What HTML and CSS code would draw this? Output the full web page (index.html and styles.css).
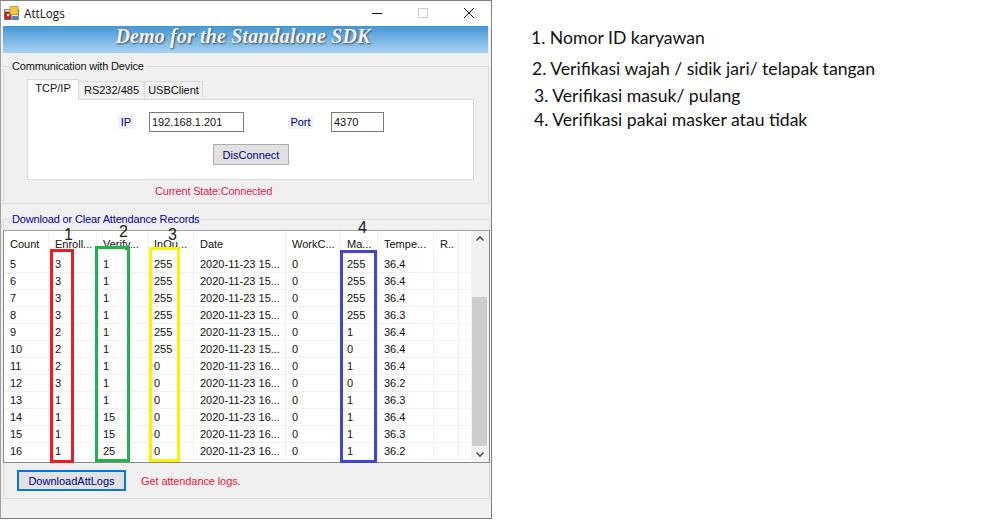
FILE: index.html
```html
<!DOCTYPE html>
<html lang="en">
<head>
    <meta charset="UTF-8">
    <title>AttLogs</title>
    <link rel="stylesheet" href="styles.css">
</head>
<body>
    <div class="window">
        <div class="titlebar">
            <svg class="app-icon" width="15" height="15" viewBox="0 0 15 15">
                <rect x="0.5" y="3.5" width="14" height="10" fill="#e8e8e8" stroke="#8a8a8a"/>
                <rect x="1" y="6" width="6" height="7" fill="#d8281e" stroke="#7a2a20" stroke-width="0.7"/>
                <rect x="3" y="8" width="2" height="2" fill="#fff"/>
                <rect x="6" y="0.5" width="8" height="8" fill="#f6c83a" stroke="#a98a2a" stroke-width="0.7"/>
                <rect x="8" y="10" width="6" height="4" fill="#4f7fd8"/>
            </svg>
            <span class="title">AttLogs</span>
            <div class="controls">
                <svg width="12" height="12" viewBox="0 0 12 12"><path d="M1 6.5H11" stroke="#111" fill="none"/></svg>
                <svg width="12" height="12" viewBox="0 0 12 12"><rect x="1.5" y="1.5" width="9" height="9" stroke="#ccc" fill="none"/></svg>
                <svg width="12" height="12" viewBox="0 0 12 12"><path d="M1 1L11 11M11 1L1 11" stroke="#111" fill="none"/></svg>
            </div>
        </div>
        <div class="banner">Demo for the Standalone SDK</div>

        <fieldset class="group group-device">
            <legend>Communication with Device</legend>
            <div class="tabs">
                <div class="tab tab-active">TCP/IP</div>
                <div class="tab tab-rs">RS232/485</div>
                <div class="tab tab-usb">USBClient</div>
            </div>
            <div class="tab-panel">
                <div class="conn-row">
                    <label class="conn-label label-ip">IP</label>
                    <input class="conn-input input-ip" type="text" value="192.168.1.201">
                    <label class="conn-label label-port">Port</label>
                    <input class="conn-input input-port" type="text" value="4370">
                </div>
                <button class="btn btn-connect">DisConnect</button>
            </div>
            <div class="state">Current State:Connected</div>
        </fieldset>

        <fieldset class="group group-records">
            <legend>Download or Clear Attendance Records</legend>
            <div class="list">
                <table class="log-table">
                    <colgroup>
                        <col class="c-count"><col class="c-enroll"><col class="c-verify"><col class="c-inout"><col class="c-date">
                        <col class="c-work"><col class="c-mask"><col class="c-temp"><col class="c-r"><col class="c-end">
                    </colgroup>
                    <thead>
                        <tr><th>Count</th><th>Enroll...</th><th>Verify...</th><th>InOu...</th><th>Date</th><th>WorkC...</th><th>Ma...</th><th>Tempe...</th><th>R..</th><th></th></tr>
                    </thead>
                    <tbody>
                        <tr><td>5</td><td>3</td><td>1</td><td>255</td><td>2020-11-23 15...</td><td>0</td><td>255</td><td>36.4</td><td></td><td></td></tr>
                        <tr><td>6</td><td>3</td><td>1</td><td>255</td><td>2020-11-23 15...</td><td>0</td><td>255</td><td>36.4</td><td></td><td></td></tr>
                        <tr><td>7</td><td>3</td><td>1</td><td>255</td><td>2020-11-23 15...</td><td>0</td><td>255</td><td>36.4</td><td></td><td></td></tr>
                        <tr><td>8</td><td>3</td><td>1</td><td>255</td><td>2020-11-23 15...</td><td>0</td><td>255</td><td>36.3</td><td></td><td></td></tr>
                        <tr><td>9</td><td>2</td><td>1</td><td>255</td><td>2020-11-23 15...</td><td>0</td><td>1</td><td>36.4</td><td></td><td></td></tr>
                        <tr><td>10</td><td>2</td><td>1</td><td>255</td><td>2020-11-23 15...</td><td>0</td><td>0</td><td>36.4</td><td></td><td></td></tr>
                        <tr><td>11</td><td>2</td><td>1</td><td>0</td><td>2020-11-23 16...</td><td>0</td><td>1</td><td>36.4</td><td></td><td></td></tr>
                        <tr><td>12</td><td>3</td><td>1</td><td>0</td><td>2020-11-23 16...</td><td>0</td><td>0</td><td>36.2</td><td></td><td></td></tr>
                        <tr><td>13</td><td>1</td><td>1</td><td>0</td><td>2020-11-23 16...</td><td>0</td><td>1</td><td>36.3</td><td></td><td></td></tr>
                        <tr><td>14</td><td>1</td><td>15</td><td>0</td><td>2020-11-23 16...</td><td>0</td><td>1</td><td>36.4</td><td></td><td></td></tr>
                        <tr><td>15</td><td>1</td><td>15</td><td>0</td><td>2020-11-23 16...</td><td>0</td><td>1</td><td>36.3</td><td></td><td></td></tr>
                        <tr><td>16</td><td>1</td><td>25</td><td>0</td><td>2020-11-23 16...</td><td>0</td><td>1</td><td>36.2</td><td></td><td></td></tr>
                    </tbody>
                </table>
                <div class="scrollbar">
                    <svg class="arrow" width="16" height="16" viewBox="0 0 16 16"><path d="M4.5 9.5L8 6L11.5 9.5" stroke="#555" stroke-width="1.6" fill="none"/></svg>
                    <div class="scroll-space"></div>
                    <div class="scroll-thumb"></div>
                    <svg class="arrow" width="16" height="16" viewBox="0 0 16 16"><path d="M4.5 6.5L8 10L11.5 6.5" stroke="#555" stroke-width="1.6" fill="none"/></svg>
                </div>
            </div>
            <div class="actions">
                <button class="btn btn-download">DownloadAttLogs</button>
                <span class="hint">Get attendance logs.</span>
            </div>
        </fieldset>

        <!-- hand drawn marks on top of the screenshot -->
        <div class="mark mark-red"></div>
        <div class="mark mark-green"></div>
        <div class="mark mark-yellow"></div>
        <div class="mark mark-blue"></div>
        <span class="mark-num num-1">1</span>
        <span class="mark-num num-2">2</span>
        <span class="mark-num num-3">3</span>
        <span class="mark-num num-4">4</span>
    </div>

    <div class="notes">
        <p class="note note-1">1. Nomor ID karyawan</p>
        <p class="note note-2">2. Verifikasi wajah / sidik jari/ telapak tangan</p>
        <p class="note note-3">3. Verifikasi masuk/ pulang</p>
        <p class="note note-4">4. Verifikasi pakai masker atau tidak</p>
    </div>
</body>
</html>
```

FILE: styles.css
```css
body {
    margin: 0;
    background-color: #fff;
    font-family: "Liberation Sans", Arial, sans-serif;
    font-size: 11px;
    color: #111;
    display: flex;
    align-items: flex-start;
}

.window {
    position: relative;
    box-sizing: border-box;
    width: 492px;
    height: 519px;
    flex: none;
    background-color: #f0f0f0;
    border: 1px solid #7f7f7f;
    border-left-color: #a0a0a0;
}

.titlebar {
    display: flex;
    align-items: center;
    box-sizing: border-box;
    height: 25px;
    background-color: #fff;
    padding-left: 3px;
    padding-bottom: 1px;
}

.app-icon {
    flex: none;
}

.title {
    margin-left: 5px;
    font-family: "Open Sans", sans-serif;
    font-size: 11.7px;
}

.controls {
    margin-left: auto;
    display: flex;
    gap: 34px;
    padding-right: 16px;
}

.banner {
    box-sizing: border-box;
    height: 27px;
    margin: 0 3px 0 2px;
    padding-right: 5px;
    background: linear-gradient(#4496d4, #a9d2f3);
    color: #f4f4f4;
    font-family: "Liberation Serif", serif;
    font-style: italic;
    font-weight: bold;
    font-size: 20px;
    letter-spacing: 0.15px;
    line-height: 21px;
    text-align: center;
    text-shadow: 1px 1px 2px #3c4a58;
}

.group {
    box-sizing: border-box;
    margin: 0 0 0 2px;
    min-width: 0;
    border: 1px solid #dcdcdc;
    padding: 0;
}

.group legend {
    margin-left: 7px;
    padding: 0 1px;
    line-height: 14px;
    height: 14px;
    letter-spacing: -0.16px;
}

.group-device {
    width: 486px;
    height: 145px;
    margin-top: 6px;
}

.group-records legend {
    color: #0000a0;
}

.tabs {
    display: flex;
    align-items: flex-end;
    height: 20px;
    margin-top: 6px;
    margin-left: 23px;
}

.tab {
    box-sizing: border-box;
    height: 18px;
    line-height: 17px;
    text-align: center;
    background-color: #f0f0f0;
    border: 1px solid #d9d9d9;
    border-bottom: none;
    margin-right: -1px;
}

.tab-active {
    position: relative;
    z-index: 1;
    width: 52px;
    height: 21px;
    margin-bottom: -1px;
    background-color: #fff;
    line-height: 17px;
}

.tab-rs {
    width: 67px;
}

.tab-usb {
    width: 59px;
}

.tab-panel {
    box-sizing: border-box;
    width: 447px;
    height: 81px;
    margin-left: 23px;
    background-color: #fff;
    border: 1px solid #d9d9d9;
    padding-top: 12px;
}

.conn-row {
    display: flex;
    align-items: center;
}

.conn-label {
    background-color: #f0f0f8;
    color: #00008b;
    text-align: center;
    line-height: 13px;
}

.label-ip {
    width: 16px;
    margin-left: 90px;
}

.label-port {
    width: 25px;
    margin-left: 44px;
}

.conn-input {
    box-sizing: border-box;
    height: 20px;
    border: 1px solid #7a7a7a;
    padding: 0 2px;
    font-family: inherit;
    font-size: 11px;
    color: #111;
    outline: none;
}

.input-ip {
    width: 95px;
    margin-left: 15px;
}

.input-port {
    width: 53px;
    margin-left: 18px;
}

.btn {
    box-sizing: border-box;
    display: block;
    background-color: #e1e1e1;
    border: 1px solid #adadad;
    color: #00008b;
    font-family: inherit;
    font-size: 11px;
    padding: 0;
}

.btn-connect {
    width: 76px;
    height: 21px;
    margin-top: 12px;
    margin-left: 185px;
}

.state {
    margin-top: 4px;
    margin-left: 151px;
    line-height: 14px;
    letter-spacing: -0.2px;
    color: #e0204f;
}

.group-records {
    width: 487px;
    height: 287px;
    margin-top: 8px;
    position: relative;
}

.list {
    display: flex;
    box-sizing: border-box;
    width: 487px;
    height: 233px;
    margin-top: 4px;
    margin-left: -1px;
    background-color: #fff;
    border: 1px solid #8a8a8a;
    border-top-color: #a0a0a0;
    overflow: hidden;
}

.log-table {
    table-layout: fixed;
    width: 468px;
    flex: none;
    border-collapse: separate;
    border-spacing: 0;
    align-self: flex-start;
}

.c-count { width: 45px; }
.c-enroll { width: 48px; }
.c-verify { width: 51px; }
.c-inout { width: 46px; }
.c-date { width: 92px; }
.c-work { width: 55px; }
.c-mask { width: 37px; }
.c-temp { width: 56px; }
.c-r { width: 25px; }
.c-end { width: 13px; }

.log-table th,
.log-table td {
    box-sizing: border-box;
    padding: 0 0 0 6px;
    overflow: hidden;
    white-space: nowrap;
    text-align: left;
    font-weight: normal;
    border-right: 1px solid #f0f0f0;
}

.log-table th {
    height: 25px;
}

.log-table td {
    height: 17px;
    border-bottom: 1px solid #f0f0f0;
}

.scrollbar {
    display: flex;
    flex-direction: column;
    width: 17px;
    height: 231px;
    margin-left: auto;
    background-color: #f0f0f0;
}

.arrow {
    display: block;
    flex: none;
    margin-left: 0;
}

.scroll-space {
    height: 50px;
}

.scroll-thumb {
    flex: 1;
    width: 15px;
    background-color: #cdcdcd;
}

.actions {
    display: flex;
    align-items: center;
    margin-top: 7px;
    margin-left: 13px;
}

.btn-download {
    width: 109px;
    height: 21px;
    border: 2px solid #0078d7;
}

.hint {
    margin-left: 15px;
    padding-top: 1px;
    letter-spacing: -0.1px;
    color: #f5143c;
}

.mark {
    position: absolute;
    box-sizing: border-box;
    border: 3px solid;
}

.mark-red {
    left: 49px;
    top: 248px;
    width: 24px;
    height: 214px;
    border-color: #ed1c24;
}

.mark-green {
    left: 94px;
    top: 245px;
    width: 35px;
    height: 216px;
    border-color: #22b14c;
}

.mark-yellow {
    left: 148px;
    top: 246px;
    width: 31px;
    height: 215px;
    border-color: #fff200;
}

.mark-blue {
    left: 339px;
    top: 249px;
    width: 37px;
    height: 213px;
    border-color: #3f48cc;
}

.mark-num {
    position: absolute;
    font-size: 16px;
    line-height: 18px;
    color: #222;
}

.num-1 { left: 63px; top: 225px; }
.num-2 { left: 118px; top: 222px; }
.num-3 { left: 167px; top: 225px; }
.num-4 { left: 357px; top: 218px; }

.notes {
    font-family: Lato, sans-serif;
    font-size: 17.6px;
    color: #111;
}

.note {
    margin: 0;
    line-height: 20px;
    white-space: nowrap;
}

.note-1 { margin-top: 28px; margin-left: 39px; }
.note-2 { margin-top: 11px; margin-left: 40px; }
.note-3 { margin-top: 7px; margin-left: 42px; }
.note-4 { margin-top: 4px; margin-left: 42px; }
```
